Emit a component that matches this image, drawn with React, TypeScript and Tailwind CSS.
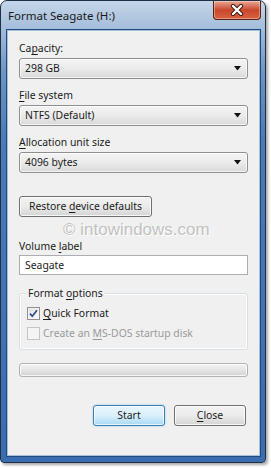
import React from "react";

function U({ children }: { children: React.ReactNode }) {
  return <span className="underline underline-offset-[2px]">{children}</span>;
}

function Combo({ value }: { value: string }) {
  return (
    <div className="mt-[2px] flex h-[21px] items-center justify-between rounded-[3px] border border-[#8e8f8f] bg-gradient-to-b from-[#f4f4f4] via-[#ebebeb] to-[#d9d9d9] pl-[5px] pr-[5px] shadow-[inset_0_0_0_1px_rgba(255,255,255,0.7)]">
      <span>{value}</span>
      <svg width="8" height="5" viewBox="0 0 8 5">
        <path d="M0 0H7L3.5 4.5Z" fill="#111" />
      </svg>
    </div>
  );
}

function Btn({ children, className = "" }: { children: React.ReactNode; className?: string }) {
  return (
    <div
      className={
        "flex h-[21px] items-center justify-center rounded-[3px] border border-[#707070] bg-gradient-to-b from-[#f2f2f2] via-[#ebebeb] to-[#d4d4d4] shadow-[inset_0_0_0_1px_rgba(255,255,255,0.8)] " +
        className
      }
    >
      {children}
    </div>
  );
}

export default function App() {
  return (
    <div
      className="h-[468px] w-[271px] bg-white text-[10.4px] leading-[15px] text-[#1b1b1b]"
      style={{ fontFamily: '"Noto Sans", "Open Sans", sans-serif' }}
    >
      <div className="flex h-[463px] w-[266px] flex-col rounded-t-[7px] rounded-b-[4px] border border-[#1f2f44] bg-[linear-gradient(to_bottom,#c4d5e8_0px,#a6bfdc_26px,#6e95c4_70px,#4a7bb6_140px,#3a6caf_100%)] shadow-[2px_2px_3px_rgba(0,0,0,0.35)]">
        <div className="flex h-[29px] shrink-0 items-start justify-between pl-[7px] pr-[4px]">
          <span className="mt-[7px] text-[11.5px] leading-[16px] text-[#1a1a1a]">Format Seagate (H:)</span>
          <div className="flex h-[19px] w-[48px] items-center justify-center rounded-b-[4px] border border-t-0 border-[#5b2116] bg-gradient-to-b from-[#e8a896] via-[#c9462d] to-[#d7633f] shadow-[inset_0_0_0_1px_rgba(255,255,255,0.35)]">
            <svg width="14" height="12" viewBox="0 0 14 12">
              <path d="M3 2L11 10M11 2L3 10" stroke="#3b1810" strokeWidth="4.2" strokeLinecap="round" />
              <path d="M3 2L11 10M11 2L3 10" stroke="#ffffff" strokeWidth="2.4" strokeLinecap="round" />
            </svg>
          </div>
        </div>

        <div className="relative mb-[6px] ml-[6px] mr-[5px] flex flex-1 flex-col border border-[#a9bfd8] bg-[#f0f0f0] px-[11px] pt-[10px] shadow-[0_0_0_1px_#1e4a80]">
          <div>
            Ca<U>p</U>acity:
          </div>
          <Combo value="298 GB" />

          <div className="mt-[9px]">
            <U>F</U>ile system
          </div>
          <Combo value="NTFS (Default)" />

          <div className="mt-[9px]">
            <U>A</U>llocation unit size
          </div>
          <Combo value="4096 bytes" />

          <Btn className="mt-[23px] w-[133px]">
            <span>
              Restore <U>d</U>evice defaults
            </span>
          </Btn>

          <div className="mt-[22px]">
            Volume <U>l</U>abel
          </div>
          <div className="mt-[1px] flex h-[20px] items-center border border-[#abadb3] bg-white pl-[5px]">
            Seagate
          </div>

          <div className="relative mt-[18px] flex flex-col gap-[5px] rounded-[3px] border border-[#d5dfe5] pb-[8px] pl-[7px] pt-[12px] shadow-[inset_0_0_0_1px_#ffffff]">
            <span className="absolute -top-[8px] left-[6px] bg-[#f0f0f0] px-[2px]">
              Format <U>o</U>ptions
            </span>
            <div className="flex items-center gap-[3px]">
              <div className="flex h-[13px] w-[13px] items-center justify-center border border-[#8f8f8f] bg-gradient-to-br from-[#dcdcdc] to-[#ffffff] shadow-[inset_0_0_0_1px_#f4f4f4]">
                <svg width="9" height="9" viewBox="0 0 9 9">
                  <path d="M1 4.6L3.3 7.2L8 1.2" stroke="#2e4a8a" strokeWidth="1.7" fill="none" />
                </svg>
              </div>
              <span>
                <U>Q</U>uick Format
              </span>
            </div>
            <div className="flex items-center gap-[3px] text-[#9a9a9a]">
              <div className="h-[13px] w-[13px] border border-[#c5c5c5] bg-[#f4f4f4]" />
              <span>
                Create an <U>M</U>S-DOS startup disk
              </span>
            </div>
          </div>

          <div className="mt-[13px] h-[14px] rounded-[3px] border border-[#b2b2b2] bg-gradient-to-b from-[#f3f3f3] via-[#e6e6e6] to-[#d2d2d2] shadow-[inset_0_0_0_1px_rgba(255,255,255,0.8)]" />

          <div className="mr-[2px] mt-[28px] flex justify-end gap-[9px]">
            <div className="flex h-[21px] w-[72px] items-center justify-center rounded-[3px] border border-[#3c7fb1] bg-gradient-to-b from-[#eaf6fd] via-[#d9f0fc] to-[#a7d9f5] shadow-[inset_0_0_0_1px_rgba(255,255,255,0.7),0_0_2px_#7ec4ea]">
              Start
            </div>
            <Btn className="w-[72px]">
              <span>
                <U>C</U>lose
              </span>
            </Btn>
          </div>

          <span
            className="pointer-events-none absolute left-[55px] top-[191px] text-[17px] leading-[16px] text-[#c2c2c2]"
            style={{ fontFamily: '"Liberation Sans", Arial, sans-serif', textShadow: "1px 1px 0 #ffffff" }}
          >
            © intowindows.com
          </span>
        </div>
      </div>
    </div>
  );
}
